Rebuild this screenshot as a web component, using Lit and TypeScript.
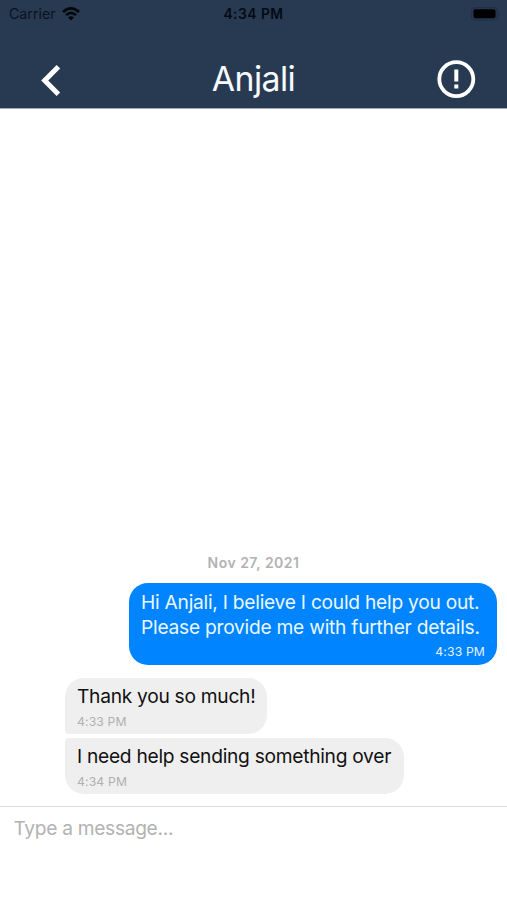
import { LitElement, html, css } from "lit";
import { customElement, property } from "lit/decorators.js";
import { classMap } from "lit/directives/class-map.js";

interface Message {
  lines: string[];
  time: string;
  mine: boolean;
  position: "single" | "first" | "last";
}

const MESSAGES: Message[] = [
  {
    lines: ["Hi Anjali, I believe I could help you out.", "Please provide me with further details."],
    time: "4:33 PM",
    mine: true,
    position: "single",
  },
  { lines: ["Thank you so much!"], time: "4:33 PM", mine: false, position: "first" },
  { lines: ["I need help sending something over"], time: "4:34 PM", mine: false, position: "last" },
];

@customElement("chat-bubble")
class ChatBubble extends LitElement {
  @property({ attribute: false }) message!: Message;

  static styles = css`
    :host { display: flex; }
    .bubble {
      box-sizing: border-box;
      border-radius: 19px;
      padding: 6px 12px 0 12.5px;
      background: #efefef;
      color: #111;
    }
    .theirs { margin-left: 64.5px; height: 56px; }
    .first { width: 202.5px; border-bottom-left-radius: 4px; }
    .last { width: 339.5px; border-top-left-radius: 4px; }
    .mine {
      margin-left: auto;
      margin-right: 10px;
      width: 368.5px;
      height: 82px;
      padding-top: 7px;
      background: #0084ff;
      color: #ebf7ff;
    }
    .line { display: block; width: max-content; line-height: 25px; font-size: 19.2px; letter-spacing: -0.28px; white-space: nowrap; }
    .mine .line { letter-spacing: -0.25px; }
    .time { display: block; font-size: 12.2px; line-height: 15px; margin-top: 5px; color: #b0b0b0; letter-spacing: 0.15px; }
    .mine .time { text-align: right; margin-top: 4px; color: #e4f3ff; }
  `;

  render() {
    const m = this.message;
    return html`<div class=${classMap({ bubble: true, mine: m.mine, theirs: !m.mine, [m.position]: !m.mine })}>
      ${m.lines.map((l) => html`<span class="line">${l}</span>`)}
      <span class="time">${m.time}</span>
    </div>`;
  }
}

@customElement("app-root")
class AppRoot extends LitElement {
  static styles = css`
    :host {
      display: flex;
      flex-direction: column;
      height: 900px;
      background: #fff;
      font-family: Inter, "Liberation Sans", sans-serif;
      overflow: hidden;
    }
    header { box-sizing: border-box; height: 109px; background: #273a52; border-bottom: 1px solid #a3abb5; flex: none; }
    .status {
      display: grid;
      grid-template-columns: 1fr auto 1fr;
      align-items: center;
      height: 27px;
      color: #09121e;
      font-size: 14.2px;
    }
    .carrier { display: flex; align-items: center; gap: 6px; padding-left: 9px; }
    .clock { font-weight: 600; font-size: 13.8px; letter-spacing: 0.5px; color: #050a12; }
    .battery { justify-self: end; margin-right: 6px; }
    svg { display: block; }
    .nav { display: grid; grid-template-columns: 102px 1fr 102px; height: 80px; padding-top: 12px; align-items: center; }
    .nav svg { margin: 0 auto; }
    .title { text-align: center; font-size: 33.8px; line-height: 40px; letter-spacing: -0.55px; color: #f6fafd; font-weight: 400; margin: 0; }
    .thread { flex: 1; display: flex; flex-direction: column; justify-content: flex-end; padding-bottom: 12px; }
    .date { text-align: center; color: #b2b2b2; font-weight: 600; font-size: 14px; line-height: 18px; letter-spacing: 0.5px; margin-bottom: 11px; }
    .reply { margin-top: 13px; }
    .follow { margin-top: 4px; }
    .composer { flex: none; box-sizing: border-box; height: 94px; border-top: 1px solid #dedede; padding: 9px 13.5px; color: #b2b2b2; font-size: 19.2px; line-height: 25px; }
    .hint { letter-spacing: -0.32px; }
  `;

  render() {
    return html`
      <header>
        <div class="status">
          <div class="carrier">
            <span>Carrier</span>
            <svg width="18" height="14" viewBox="0 0 18 14" fill="none" stroke="#02060b" stroke-width="2.5">
              <path d="M1 5Q9 -2.2 17 5M4 8.1Q9 3.6 14 8.1" />
              <path d="M9 13.4L6.1 10.5Q9 7.9 11.9 10.5Z" fill="#02060b" stroke="none" />
            </svg>
          </div>
          <span class="clock">4:34 PM</span>
          <svg class="battery" width="30" height="14" viewBox="0 0 30 14">
            <rect x=".6" y=".6" width="25.8" height="12.4" rx="3.6" fill="none" stroke="#1f2f45" stroke-width="1.2" />
            <rect x="2.5" y="2.2" width="22" height="9" rx="1.6" fill="#000" />
            <path d="M27.6 4.6Q29.6 6.8 27.6 9Z" fill="#1f2f45" />
          </svg>
        </div>
        <div class="nav">
          <svg width="22" height="34" viewBox="0 0 22 34" fill="none" stroke="#fff" stroke-width="5">
            <path d="M18.4 4.8L4.7 18.5L18.4 32.2" />
          </svg>
          <h1 class="title">Anjali</h1>
          <svg width="40" height="40" viewBox="0 0 40 40">
            <circle cx="20.3" cy="20.1" r="17" fill="none" stroke="#fff" stroke-width="3.8" />
            <path d="M18.3 10.5h4v12h-4zM18.3 25.5h4v4h-4z" fill="#fff" />
          </svg>
        </div>
      </header>
      <main class="thread">
        <div class="date">Nov 27, 2021</div>
        <chat-bubble .message=${MESSAGES[0]}></chat-bubble>
        <chat-bubble class="reply" .message=${MESSAGES[1]}></chat-bubble>
        <chat-bubble class="follow" .message=${MESSAGES[2]}></chat-bubble>
      </main>
      <footer class="composer"><span class="hint">Type a message...</span></footer>
    `;
  }
}
